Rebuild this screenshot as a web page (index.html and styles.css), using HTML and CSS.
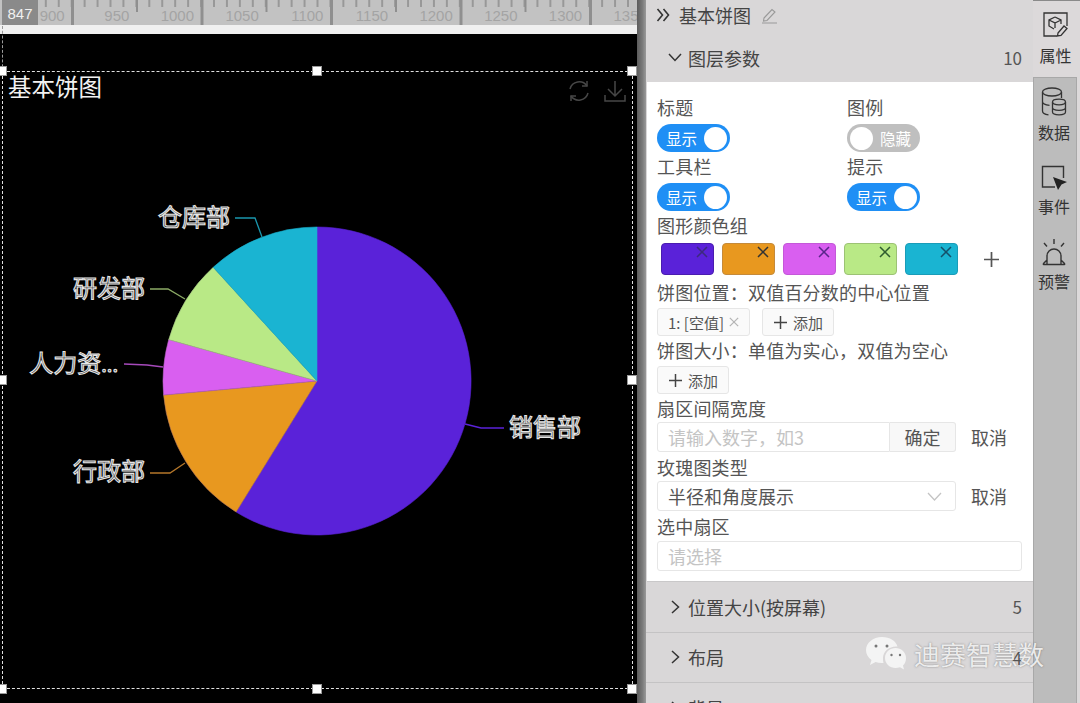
FILE: index.html
```html
<!DOCTYPE html>
<html lang="zh-CN">
<head>
    <meta charset="UTF-8">
    <meta name="viewport" content="width=device-width, initial-scale=1.0">
    <title>基本饼图</title>
    <link rel="stylesheet" href="styles.css">
</head>
<body>
    <svg class="defs" width="0" height="0">
        <symbol id="close" viewBox="0 0 12 12"><path d="M1 1l10 10M11 1L1 11" fill="none" stroke="currentColor" stroke-width="1.5"/></symbol>
        <symbol id="plus" viewBox="0 0 14 14"><path d="M7 0v14M0 7h14" fill="none" stroke="currentColor" stroke-width="1.6"/></symbol>
    </svg>

    <main class="canvas">
        <div class="ruler">
            <span class="ruler-pos">847</span>
            <span>900</span><span>950</span><span>1000</span><span>1050</span><span>1100</span>
            <span>1150</span><span>1200</span><span>1250</span><span>1300</span><span>1350</span>
        </div>
        <div class="ruler-gap"></div>
        <div class="stage">
            <svg class="chart" viewBox="0 34 637 669" width="637" height="669">
                <g stroke-width="0.6">
                    <path d="M317 381V227A154 154 0 1 1 236.1 512Z" fill="#5a22d9" stroke="#5a22d9"/>
                    <path d="M317 381L236.1 512A154 154 0 0 1 163.6 395Z" fill="#e8981f" stroke="#b9785a"/>
                    <path d="M317 381L163.6 395A154 154 0 0 1 168.7 339.6Z" fill="#d95ff0" stroke="#b45fc0"/>
                    <path d="M317 381L168.7 339.6A154 154 0 0 1 213.2 267.3Z" fill="#b9e986" stroke="#a0c080"/>
                    <path d="M317 381L213.2 267.3A154 154 0 0 1 317 227Z" fill="#1ab4d2" stroke="#1ab4d2"/>
                </g>
                <g fill="none" stroke-width="1.3">
                    <path d="M465 424l16 4h23" stroke="#5a22d9"/>
                    <path d="M150 473h20l15-10" stroke="#b5772a"/>
                    <path d="M124 364l23 1 16 2" stroke="#a64abb"/>
                    <path d="M150 289h18l17 10" stroke="#8cab66"/>
                    <path d="M235 218h20l7 19" stroke="#1a96ad"/>
                </g>
                <g class="chart-labels">
                    <text x="581" y="436">销售部</text>
                    <text x="145" y="480">行政部</text>
                    <text x="118" y="372">人力资<tspan class="dots">...</tspan></text>
                    <text x="145" y="297">研发部</text>
                    <text x="230" y="226">仓库部</text>
                </g>
            </svg>
            <div class="selection">
                <i class="handle h-tl"></i><i class="handle h-tc"></i><i class="handle h-tr"></i>
                <i class="handle h-ml"></i><i class="handle h-mr"></i>
                <i class="handle h-bl"></i><i class="handle h-bc"></i><i class="handle h-br"></i>
                <div class="chart-head">
                    <h1>基本饼图</h1>
                    <div class="chart-tools">
                        <svg width="24" height="24" viewBox="0 0 24 24" fill="none" stroke="currentColor" stroke-width="1.5">
                            <path d="M3 10A9.5 9.5 0 0 1 20 7M21 14A9.5 9.5 0 0 1 4 17"/>
                            <path d="M20 2v5h-5M4 22v-5h5"/>
                        </svg>
                        <svg width="22" height="24" viewBox="0 0 22 24" fill="none" stroke="currentColor" stroke-width="1.5">
                            <path d="M11 2v15M4 10l7 7 7-7M1 16v6h20v-6"/>
                        </svg>
                    </div>
                </div>
            </div>
        </div>
    </main>

    <div class="splitter"></div>

    <aside class="panel">
        <div class="panel-title">
            <svg width="14" height="14" viewBox="0 0 14 14" fill="none" stroke="#333" stroke-width="1.6"><path d="M1.500 1l5 6-5 6M7.500 1l5 6-5 6"/></svg>
            <span>基本饼图</span>
            <svg width="17" height="17" viewBox="0 0 17 17" fill="none" stroke="#999" stroke-width="1.1"><path d="M3 11L11 2.500l3 2.500-8 8.500-3.500 .5zM1 16h15"/></svg>
        </div>
        <div class="section-head open">
            <svg width="14" height="9" viewBox="0 0 14 9" fill="none" stroke="#333" stroke-width="1.5"><path d="M1 1l6 6.500L13 1"/></svg>
            <span>图层参数</span>
            <em>10</em>
        </div>

        <div class="section-body">
            <div class="switch-grid">
                <div>
                    <label>标题</label>
                    <div class="switch on"><span>显示</span><i></i></div>
                </div>
                <div>
                    <label>图例</label>
                    <div class="switch"><i></i><span>隐藏</span></div>
                </div>
                <div>
                    <label>工具栏</label>
                    <div class="switch on"><span>显示</span><i></i></div>
                </div>
                <div>
                    <label>提示</label>
                    <div class="switch on"><span>显示</span><i></i></div>
                </div>
            </div>

            <label>图形颜色组</label>
            <div class="swatches">
                <div class="swatch c-purple"><svg width="12" height="12"><use href="#close"/></svg></div>
                <div class="swatch c-orange"><svg width="12" height="12"><use href="#close"/></svg></div>
                <div class="swatch c-pink"><svg width="12" height="12"><use href="#close"/></svg></div>
                <div class="swatch c-green"><svg width="12" height="12"><use href="#close"/></svg></div>
                <div class="swatch c-teal"><svg width="12" height="12"><use href="#close"/></svg></div>
                <svg class="swatch-add" width="15" height="15"><use href="#plus"/></svg>
            </div>

            <label>饼图位置：双值百分数的中心位置</label>
            <div class="tag-row">
                <div class="tag">1: [空值]<svg width="10" height="10"><use href="#close"/></svg></div>
                <div class="add-btn"><svg width="13" height="13"><use href="#plus"/></svg>添加</div>
            </div>

            <label>饼图大小：单值为实心，双值为空心</label>
            <div class="tag-row">
                <div class="add-btn"><svg width="13" height="13"><use href="#plus"/></svg>添加</div>
            </div>

            <label>扇区间隔宽度</label>
            <div class="field-row">
                <div class="input-group">
                    <div class="input placeholder">请输入数字，如3</div>
                    <div class="addon">确定</div>
                </div>
                <a class="cancel">取消</a>
            </div>

            <label>玫瑰图类型</label>
            <div class="field-row">
                <div class="input select">
                    半径和角度展示
                    <svg width="15" height="9" viewBox="0 0 15 9" fill="none" stroke="#c4c4c4" stroke-width="1.3"><path d="M1 1l6.500 7L14 1"/></svg>
                </div>
                <a class="cancel">取消</a>
            </div>

            <label>选中扇区</label>
            <div class="input placeholder wide">请选择</div>
        </div>

        <div class="section-head">
            <svg width="9" height="14" viewBox="0 0 9 14" fill="none" stroke="#333" stroke-width="1.5"><path d="M1 1l6.500 6L1 13"/></svg>
            <span>位置大小(按屏幕)</span>
            <em>5</em>
        </div>
        <div class="section-head">
            <svg width="9" height="14" viewBox="0 0 9 14" fill="none" stroke="#333" stroke-width="1.5"><path d="M1 1l6.500 6L1 13"/></svg>
            <span>布局</span>
            <em>4</em>
        </div>
        <div class="section-head">
            <svg width="9" height="14" viewBox="0 0 9 14" fill="none" stroke="#333" stroke-width="1.5"><path d="M1 1l6.500 6L1 13"/></svg>
            <span>背景</span>
        </div>
    </aside>

    <nav class="rail">
        <div class="rail-item active">
            <svg width="27" height="27" viewBox="0 0 27 27" fill="none" stroke="#333" stroke-width="1.3">
                <path d="M25 15V2H2v23h13"/>
                <path d="M13 6l6 3v4M13 6L7 9v6l5 3M7 9l6 3v5M13 12l6-3"/>
                <path d="M16 22l6-7 3 2.500-6 7-3.500 .5z"/>
            </svg>
            <span>属性</span>
        </div>
        <div class="rail-rest">
            <div class="rail-item">
                <svg width="26" height="30" viewBox="0 0 26 30" fill="none" stroke="#333" stroke-width="1.3">
                    <ellipse cx="11" cy="5" rx="9.500" ry="4"/>
                    <path d="M1.500 5v19c0 2 3 3.500 6 3.800M20.500 5v6M1.500 14.500c0 2 3 3.500 7 3.800"/>
                    <ellipse cx="18" cy="15" rx="6.500" ry="2.800"/>
                    <path d="M11.500 15v10c0 1.800 3 2.800 6.500 2.800s6.500-1 6.500-2.800V15M11.500 20.500c0 1.800 3 2.800 6.500 2.800s6.500-1 6.500-2.800"/>
                </svg>
                <span>数据</span>
            </div>
            <div class="rail-item">
                <svg width="26" height="26" viewBox="0 0 26 26">
                    <path d="M14 22H1.500V1.500h21V13" fill="none" stroke="#333" stroke-width="1.4"/>
                    <path d="M12 12l14 5-5.500 2.500L17 25z" fill="#222"/>
                </svg>
                <span>事件</span>
            </div>
            <div class="rail-item">
                <svg width="26" height="27" viewBox="0 0 26 27" fill="none" stroke="#333" stroke-width="1.4">
                    <path d="M6 25V17a7 7 0 0 1 14 0v8M3 25.500h20c1 0 .8-.5 0-1.500l-3-3M6 21l-3 3c-.8 1-1 1.500 0 1.500"/>
                    <path d="M13 0v5M3 4l3 3.500M23 4l-3 3.500"/>
                </svg>
                <span>预警</span>
            </div>
        </div>
    </nav>

    <div class="watermark">
        <svg width="42" height="36" viewBox="0 0 42 36" fill="#f4f4f4">
            <path d="M17 1C8 1 1 7 1 14c0 4 2 7.500 5.500 10L5 29l5.500-3c2 .6 4 1 6 1 1 0 1.500 0 2-.1C18 25 18 23 18 22c0-6.500 6-11.500 13-11.500h1.500C31 5 25 1 17 1z"/>
            <path d="M41 22c0-6-5-10-10.500-10S20 16 20 22s5 10 10.500 10c1.500 0 3-.2 4.500-.8l4 2.300-1-4c2-2 3-4.500 3-7.500z"/>
            <g fill="#777"><circle cx="11" cy="10" r="1.500"/><circle cx="22" cy="10" r="1.500"/><circle cx="26.500" cy="19" r="1.200"/><circle cx="35" cy="19" r="1.200"/></g>
        </svg>
        <span>迪赛智慧数</span>
    </div>
</body>
</html>
```

FILE: styles.css
```css
* {
    box-sizing: border-box;
}
html, body {
    height: 100%;
}
body {
    margin: 0;
    width: 1080px;
    height: 703px;
    overflow: hidden;
    position: relative;
    display: flex;
    font-family: "Noto Sans CJK SC", "Noto Sans", sans-serif;
    color: #444;
    background: #000;
}
.defs {
    position: absolute;
}

/* canvas side */
.canvas {
    width: 637px;
    flex: none;
    display: flex;
    flex-direction: column;
}
.ruler {
    height: 25px;
    flex: none;
    position: relative;
    display: flex;
    overflow: hidden;
    background-color: #c2c2c2;
    background-image:
        linear-gradient(to right, #8f8f8f 3px, transparent 3px),
        linear-gradient(to right, #8f8f8f 2px, transparent 2px),
        linear-gradient(to right, #989898 2px, transparent 2px);
    background-repeat: repeat-x;
    background-size: 129.5px 25px, 129.5px 12px, 12.95px 7px;
    background-position: 71px 0, 136px 0, 6px 0;
}
.ruler span {
    width: 64.7px;
    flex: none;
    text-align: right;
    font: 15px/22px "Liberation Sans", sans-serif;
    padding-top: 5px;
    color: #a4a4a4;
}
.ruler .ruler-pos {
    position: absolute;
    left: 2px;
    top: 0;
    width: 36px;
    height: 25px;
    padding-top: 3px;
    text-align: center;
    background: #8a8a8a;
    color: #f0f0f0;
}
.ruler-gap {
    height: 9px;
    flex: none;
    background: #f0f0f0;
}
.stage {
    flex: 1;
    position: relative;
    background: #000;
}
.chart {
    display: block;
}
.chart-labels text {
    font-size: 24px;
    text-anchor: end;
    fill: #3a3a3a;
    stroke: #e6e6e6;
    stroke-width: 1.1px;
}
.chart-labels .dots {
    font-size: 20px;
}

/* selection frame with its drag handles */
.selection {
    position: absolute;
    left: 2px;
    top: 37px;
    width: 631px;
    height: 618px;
    border: 1px dashed #e0e0e0;
}
.selection::before {
    content: "";
    position: absolute;
    left: -1px;
    top: -46px;
    height: 46px;
    border-left: 1px dashed #9a9a9a;
}
.handle {
    position: absolute;
    width: 10px;
    height: 10px;
    background: #fff;
    border: 1px solid #999;
}
.h-tl { left: -6px; top: -6px; }
.h-tc { left: 309px; top: -6px; }
.h-tr { right: -5px; top: -6px; }
.h-ml { left: -6px; top: 303px; }
.h-mr { right: -5px; top: 303px; }
.h-bl { left: -6px; bottom: -6px; }
.h-bc { left: 309px; bottom: -6px; }
.h-br { right: -5px; bottom: -6px; }
.chart-head {
    display: flex;
    justify-content: space-between;
    margin-top: -2px;
    padding: 0 6px 0 5px;
}
.chart-head h1 {
    margin: 0;
    font-size: 23.500px;
    line-height: 32px;
    font-weight: 400;
    color: #f2f2f2;
}
.chart-tools {
    display: flex;
    gap: 13px;
    padding-top: 9px;
    color: #474747;
}

.splitter {
    width: 9px;
    flex: none;
    background: linear-gradient(to right, #5c5c5c, #7a7a7a 60%, #9a9a9a);
}

/* property panel */
.panel {
    width: 387px;
    flex: none;
    background: #d9d7d8;
    overflow: hidden;
}
.panel-title {
    height: 30px;
    display: flex;
    align-items: center;
    gap: 10px;
    padding-left: 10px;
    font-size: 18px;
    color: #444;
}
.panel-title span {
    margin-left: -1px;
}
.section-head {
    height: 50.500px;
    display: flex;
    align-items: center;
    padding: 0 11px 0 25px;
    border-bottom: 1px solid #c4c3c4;
    font-size: 18px;
    color: #444;
}
.section-head.open {
    height: 52px;
    padding-top: 3px;
    border: none;
    padding-left: 22px;
}
.section-head svg {
    margin-right: 8px;
}
.section-head.open svg {
    margin-right: 6px;
}
.section-head span {
    flex: 1;
}
.section-head em {
    font-style: normal;
    font-size: 17px;
    color: #555;
}
.section-body {
    height: 500px;
    margin-left: 1px;
    padding: 12px 11px 0 10px;
    background: #fff;
    border-bottom: 1px solid #c9c8c9;
}
.section-body label {
    display: block;
    font-size: 18px;
    line-height: 26px;
    letter-spacing: 0.2px;
    color: #555;
}

.switch-grid {
    display: grid;
    grid-template-columns: 190px 1fr;
    row-gap: 3px;
    margin-bottom: 3px;
}
.switch-grid > div {
    height: 56px;
}
.switch {
    width: 73px;
    height: 28px;
    margin-top: 4px;
    border-radius: 14px;
    display: flex;
    align-items: center;
    justify-content: space-between;
    padding: 0 3px;
    background: #bfbfbf;
    color: #fff;
    font-size: 15.500px;
}
.switch.on {
    background: #1f8ff5;
    padding-left: 9px;
}
.switch span {
    padding-right: 6px;
}
.switch.on span {
    padding-right: 0;
}
.switch i {
    width: 23px;
    height: 23px;
    border-radius: 50%;
    background: #fff;
}

.swatches {
    display: flex;
    align-items: center;
    gap: 8px;
    padding: 5px 0 0 4px;
    margin-bottom: 4px;
}
.swatch {
    width: 53px;
    height: 32px;
    border-radius: 4px;
    display: flex;
    justify-content: flex-end;
    padding: 2px 5px;
    color: #333;
}
.c-purple { background: #5a22d9; border: 1px solid #4a1cb0; color: #3c2a7e; }
.c-orange { background: #e8981f; border: 1px solid #c58a3a; }
.c-pink { background: #d95ff0; border: 1px solid #c458d8; color: #58268a; }
.c-green { background: #b9e986; border: 1px solid #9cc274; color: #2f5c2f; }
.c-teal { background: #1ab4d2; border: 1px solid #1a9cb8; color: #14506a; }
.swatch-add {
    margin-left: 18px;
    color: #555;
}

.tag-row {
    display: flex;
    gap: 12px;
    height: 28px;
    margin: 3px 0 1px;
}
.tag, .add-btn {
    height: 28px;
    display: flex;
    align-items: center;
    border: 1px solid #e6e6e6;
    border-radius: 3px;
    background: #fafafa;
    font-size: 15px;
    color: #555;
}
.tag {
    width: 93px;
    padding: 0 0 0 10px;
}
.tag svg {
    margin-left: 5px;
    color: #b5b5b5;
}
.add-btn {
    width: 72px;
    padding: 0 0 0 11px;
}
.add-btn svg {
    margin-right: 6px;
    color: #444;
}

.field-row {
    display: flex;
    align-items: center;
    height: 30px;
    margin: 1px 0 2px;
}
.input-group {
    display: flex;
    width: 299px;
}
.input {
    height: 30px;
    flex: 1;
    border: 1px solid #e6e6e6;
    border-radius: 3px 0 0 3px;
    padding-left: 10px;
    font-size: 18px;
    line-height: 28px;
    color: #555;
}
.input.placeholder {
    color: #c4c4c4;
}
.addon {
    width: 66px;
    height: 30px;
    border: 1px solid #e6e6e6;
    border-left: none;
    border-radius: 0 3px 3px 0;
    background: #f8f8f8;
    text-align: center;
    font-size: 18px;
    line-height: 28px;
    color: #555;
}
.select {
    flex: none;
    width: 299px;
    border-radius: 3px;
    display: flex;
    justify-content: space-between;
    align-items: center;
    padding-right: 13px;
}
.cancel {
    margin-left: 15px;
    font-size: 18px;
    color: #555;
}
.input.wide {
    flex: none;
    width: 365px;
    margin-top: 2px;
    border-radius: 3px;
}

/* right hand tab rail */
.rail {
    flex: 1;
    display: flex;
    flex-direction: column;
    background: #dcd9da;
}
.rail-item {
    display: flex;
    flex-direction: column;
    align-items: center;
    font-size: 16px;
    line-height: 22px;
    color: #333;
}
.rail-item.active {
    height: 77px;
    padding-top: 10px;
    padding-right: 2px;
    border-top: 1px solid #8a8a8a;
}
.rail-item.active svg {
    margin-bottom: 6px;
}
.rail-rest {
    flex: 1;
    display: flex;
    flex-direction: column;
    gap: 22px;
    padding: 9px 2px 0 0;
    margin-right: 3px;
    background: #bcbcbc;
    border: 1px solid #a8a8a8;
    border-width: 1px 1px 0 1px;
}
.rail-rest svg {
    margin-bottom: 4px;
}

/* watermark over the panel corner */
.watermark {
    position: absolute;
    left: 865px;
    top: 634px;
    display: flex;
    align-items: center;
    gap: 7px;
    font-size: 26px;
    line-height: 40px;
    color: rgba(245, 245, 245, 0.92);
    text-shadow: 0 0 2px rgba(90, 90, 90, 0.7);
}
```
